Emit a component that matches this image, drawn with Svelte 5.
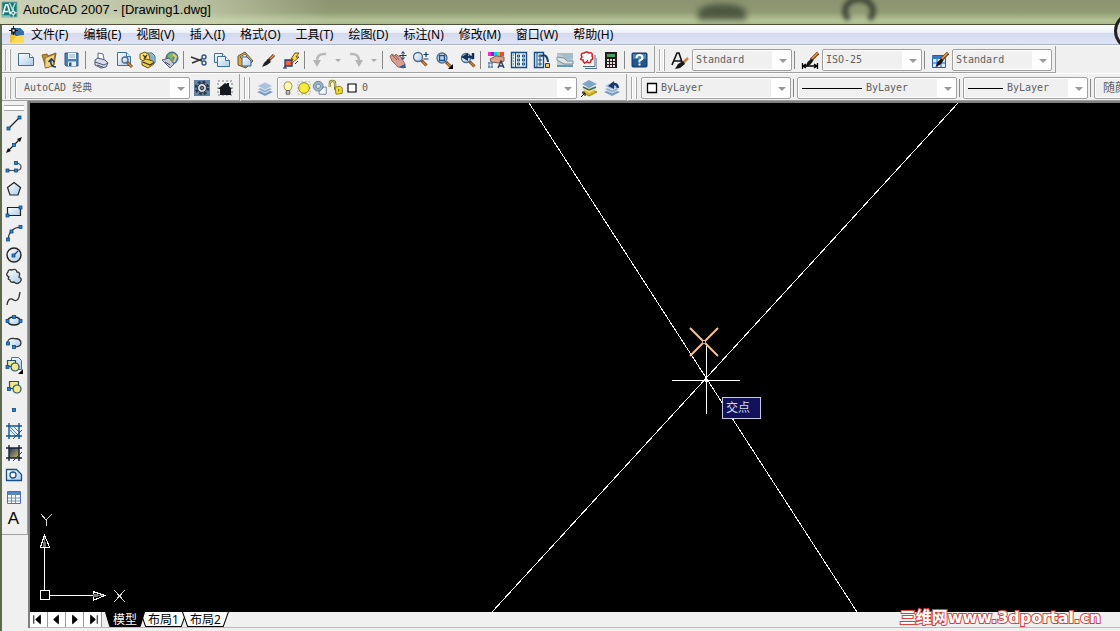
<script>
  const page = (x, y, w, h) =>
    `<path d="M${x} ${y}h${w - 4}l4 4v${h - 4}h-${w}z" fill="url(#paper)" stroke="#3f6f9f"/><path d="M${x + w - 4} ${y}v4h4" fill="#fff" stroke="#3f6f9f"/>`;
  const brush = '<path d="M17 2L10 9" stroke="#6b3a17" stroke-width="3.2"/><path d="M16.500 2.200L10.500 8" stroke="#e59a4c" stroke-width="1.600"/><path d="M10.500 7.500l2 2-3 4-5 2.500 2-5z" fill="#161616"/>';
  const dot = (x, y) => `<rect x="${x - 1.5}" y="${y - 1.5}" width="3" height="3" fill="#2f80c8" stroke="#0b4c88" stroke-width=".8"/>`;
  const lens = (x, y, r) =>
    `<path d="M${x + r - 1} ${y + r - 1}l5 5" stroke="#7b4319" stroke-width="3"/><path d="M${x + r} ${y + r}l4 4" stroke="#d18c4a" stroke-width="1.200"/><circle cx="${x}" cy="${y}" r="${r}" fill="url(#paper)" stroke="#4d6b88" stroke-width="1.300"/>`;
  const printer = '<path d="M6 8l0-6 5 1 1 5" fill="#fff" stroke="#5a6a90"/><path d="M3 9l3-2 7 2 3 3-2 4-5 1-6-3z" fill="#d9dbe8" stroke="#4a5578"/><path d="M3 11l9 3 4-2M5 14l6 2" fill="none" stroke="#4a5578"/>';
  const stack = '<path d="M1 13l8-3 8 3-8 4z" fill="#7b9cc2"/><path d="M1 10l8-3 8 3-8 4z" fill="#8fadcf" stroke="#f0f0f0" stroke-width=".8"/><path d="M1 7l8-4 8 4-8 4z" fill="#a9c2de" stroke="#f0f0f0" stroke-width=".8"/>';
  const hash = '<path d="M4 1v16M14 1v16M1 4h16M1 14h16" stroke="#14538f" stroke-width="1.400"/>';

  const icons = {
    app: '<path d="M1 1h16v16H1z" fill="#147b78"/><path d="M2 14L5 4h2l3 10M3 11h5" fill="none" stroke="#fff" stroke-width="1.600"/><path d="M9 2l3 7 3-7M1 16h9" fill="none" stroke="#b8e3dc" stroke-width="1.400"/><path d="M13 8v9M9 12.500h8" stroke="#fff"/><path d="M11.500 11h3v3h-3z" fill="#147b78" stroke="#fff"/><path d="M1 1h16v16H1z" fill="none" stroke="#8ab5aa"/>',
    doc: '<path d="M3 2h9l4 4v9H3z" fill="#1c4a80"/><path d="M8 2h4l4 4v3H8z" fill="#2f70ad"/><path d="M2 9l4-1 2 2 8-1v8H2z" fill="#f0c23c"/><path d="M16 9L8 10 3 17h13z" fill="#ffd95a"/><path d="M5.500 0v9M1 4.500h9" stroke="#111"/><path d="M4 3h3v3H4z" fill="#fff" stroke="#111"/>',
    new: page(1.5, 2.5, 15, 12),
    open: '<path d="M2 4l5-1 1 2 8-3-2 12-8 3z" fill="#b98f35" stroke="#8b6420"/><path d="M5 7l10-4-2 12-8 2z" fill="#ecd489" stroke="#8b6420" stroke-width=".8"/><path d="M16 16c-4 0-6-3-5-7M8.500 11l3-3 3 3" fill="none" stroke="#173e6e" stroke-width="1.600"/>',
    save: '<path d="M2 2h13v13H3l-1-1z" fill="#4c81b7" stroke="#285b91"/><path d="M5 2h8v6H5z" fill="#e6f0f8"/><path d="M6 4h6M6 6h6" stroke="#9ab6ce"/><path d="M5 10.500h8V15H5z" fill="#e6edf4"/><path d="M6 11.500h2.500V15H6z" fill="#285b91"/>',
    print: printer,
    preview: page(2.5, 1.5, 13, 13) + lens(10, 9, 3),
    publish: '<path d="M6 2h8l3 3v7H6z" fill="#b4d3e6" stroke="#356989"/><circle cx="12" cy="7" r="4" fill="#7fb4da"/><path d="M2 3l5-2 4 3 1 4-5 3-5-3z" fill="#ffe365" stroke="#725b16"/><path d="M4 10l4-2 7 2 1 3-6 4-6-3z" fill="#e6cf50" stroke="#605019"/><path d="M5 4l3 3M6 8l3-4M5 11l7 3 3-2" fill="none" stroke="#4a3410" stroke-width="1.300"/>',
    globe: '<circle cx="11" cy="7" r="6" fill="#4188bd" stroke="#446775"/><path d="M7 4q4-4 8 1l-4 2 2 5-4-1-2-3z" fill="#86b65b"/><path d="M12 3l3 3-2 5" stroke="#eacb75" fill="none" stroke-width="2"/><path d="M1 9l7-2 5 6-4 4z" fill="#c9cad7" stroke="#596176"/><path d="M4 11l5 3" stroke="#444"/>',
    cut: '<path d="M1 6l11 4M2 12l10-4" stroke="#333" stroke-width="1.400"/><circle cx="14" cy="6" r="2" fill="none" stroke="#2d5689" stroke-width="1.400"/><circle cx="14" cy="12" r="2" fill="none" stroke="#2d5689" stroke-width="1.400"/>',
    copy: page(1.5, 2.5, 12, 9) + page(4.5, 5.5, 12, 10),
    paste: '<path d="M2 5l7-4 8 9-7 7-8-3z" fill="#d9a94c" stroke="#765426"/><path d="M4 6l5-3 2 2-4 4z" fill="#eee" stroke="#666"/><path d="M6 6h5l4 4v5H6z" fill="url(#paper)" stroke="#34618a"/>',
    match: '<path d="M15 4L9 10" stroke="#5b2d16" stroke-width="3"/><path d="M15 4l-4 4" stroke="#dda06e" stroke-width="1.200"/><path d="M9 8l3 3-4 3-5 2 2-4z" fill="#202020"/>',
    block: '<path d="M3 9h7v6H3z" fill="#ef6441" stroke="#1c3e6c" stroke-width="1.300"/><path d="M1 17h4M3 15v2M13 13l3-3" stroke="#222"/><path d="M13 2h4l-3 4h3l-8 7 2-5H9z" fill="#ffe041" stroke="#6a3a12" stroke-width=".9"/>',
    undo: '<path d="M15 3Q6 2 6 10" fill="none" stroke="#b9b9b9" stroke-width="2.500"/><path d="M2 9h8l-4 7z" fill="#b4b4b4"/>',
    redo: '<path d="M3 3q9-1 9 7" fill="none" stroke="#b9b9b9" stroke-width="2.500"/><path d="M8 9h8l-4 7z" fill="#b4b4b4"/>',
    pan: '<path d="M1 5l2-2 3 2 1-2 2 2 2 0 5 8-1 4-6-1-6-6z" fill="#d99c91" stroke="#80534e" stroke-width=".8"/><path d="M3 4l5 5M6 4l4 5" stroke="#8d625b"/><path d="M10 16l6-3 1 4h-5z" fill="#355f94"/><path d="M14 1v7M10.500 4.500h7" stroke="#123b6d"/><path d="M12.500 2.500L14 .500l1.500 2M12.500 6.500L14 8.500l1.500-2" fill="none" stroke="#123b6d"/>',
    zoomrt: lens(6, 6, 4.5) + '<path d="M14 1v5M11.500 3.500h5M11.500 8h5" stroke="#123b6d" stroke-width="1.200"/>',
    zoomwin: lens(7, 7, 5) + '<path d="M4.500 4.500h5v5h-5z" fill="#bdd4ea" stroke="#164f87" stroke-width="1.400"/><path d="M18 13v5h-5z" fill="#000"/>',
    zoomprev: lens(8, 7, 4.5) + '<path d="M15 2v6q-1-3-5-2" fill="none" stroke="#12325c" stroke-width="2.500"/><path d="M3 6l7-4v8z" fill="#12325c"/>',
    props: '<path d="M1 1h3v4H1z" fill="#f22bc8"/><path d="M4 1h3v4H4z" fill="#7428df"/><path d="M7 1h3v4H7z" fill="#1ac4eb"/><path d="M10 1h3v4h-3z" fill="#74d83a"/><path d="M13 1h4v4h-4z" fill="#ff4134"/><path d="M3 8l6-3 8 1v4l-5 2-8-1z" fill="#dfa58f" stroke="#82584e"/><path d="M2 11v6M5 11v6M1 12h5M1 16h5" stroke="#47759f"/><path d="M11 17l3-7 3 7M12 15h4" fill="none" stroke="#283e5c" stroke-width="1.400"/>',
    center: '<path d="M1.500 1.500h15v15h-15z" fill="#eaf2fa" stroke="#174d83" stroke-width="1.400"/><path d="M5.500 2v14" stroke="#174d83"/><path d="M3 4h1M3 7h1M3 10h1M3 13h1" stroke="#174d83"/><path d="M7.500 4h2v2h-2zM12.500 4h2v2h-2zM7.500 8h2v2h-2zM12.500 8h2v2h-2zM7.500 12h2v2h-2zM12.500 12h2v2h-2z" fill="none" stroke="#174d83"/>',
    palette: '<path d="M1.500 1.500h9v15h-9z" fill="#eaf2fa" stroke="#174d83" stroke-width="1.400"/><path d="M4 2v14" stroke="#174d83"/><path d="M6 4h2v2H6zM6 8h2v2H6zM6 12h2v2H6z" fill="none" stroke="#174d83"/><path d="M8 5q6-3 7 6" fill="none" stroke="#173d6c" stroke-width="2"/><path d="M12.500 12.500h4v4h-4z" fill="#e9cf79" stroke="#173d6c"/>',
    sheet: '<path d="M1 2h16v14H1z" fill="#bfcbd3"/><path d="M1 3q6 0 9 6l7-2V2H1z" fill="#a5bccb"/><path d="M1 6l7 1 3 3h6v3H8L1 9z" fill="#dfe5e6" stroke="#78909f"/><path d="M1 15h16" stroke="#6599b7" stroke-width="2"/>',
    markup: '<path d="M4 15.500h12V4M6 17.500h12V7" fill="none" stroke="#526c86"/><path d="M1 1h13v13H1z" fill="#fff4f2"/><path d="M3 6q-2-4 2-4 3-2 5 0 4-1 3 3 2 3-1 4 0 4-4 2-4 2-4-2-4 0-1-3z" fill="#fff" stroke="#d6242b" stroke-width="1.600"/><path d="M5 13l4-4" stroke="#d6242b"/>',
    calc: '<path d="M3 1h12v16H3z" fill="#231a1b"/><path d="M5 3h8v3H5z" fill="#4e9b65"/><path d="M5 8h2v2H5zM8 8h2v2H8zM11 8h2v2h-2zM5 11h2v2H5zM8 11h2v2H8zM11 11h2v2h-2zM5 14h2v2H5zM8 14h2v2H8zM11 14h2v2h-2z" fill="#e9dddd"/>',
    help: '<rect x="1" y="2" width="15" height="14" rx="1" fill="#20578f" stroke="#10365f"/><path d="M2 3h13v5H2z" fill="#4c82b5"/><path d="M5.500 7Q5.500 4 8.500 4t3 3Q11.500 8.500 8.500 9.500v2" fill="none" stroke="#fff" stroke-width="2"/><path d="M7.500 12.500h2v2h-2z" fill="#fff"/>',
    textstyle: '<path d="M1 14L6 2h2l4 12M3 10h7" fill="none" stroke="#101010" stroke-width="1.600"/><path d="M17 7l-5 5" stroke="#c68446" stroke-width="2.500"/><path d="M12 10l2 3-5 4-5 1 3-5z" fill="#181818"/>',
    dimstyle: brush + '<path d="M1.500 12v6M16.500 12v6M2 15h14M5 13l-3 2 3 2M13 13l3 2-3 2" fill="none" stroke="#000" stroke-width="1.300"/>',
    tablestyle: '<path d="M1.500 4.500h13v12h-13z" fill="#d9eafa" stroke="#235eaa"/><path d="M1 5h14v3H1z" fill="#3479c4"/><path d="M2 12h12M6 8v8M10 8v8" stroke="#235eaa"/>' + brush,
    gear: '<path d="M1 1h16v16H1z" fill="#5f83a8"/><circle cx="9" cy="9" r="6" fill="none" stroke="#2a343f" stroke-width="2.400" stroke-dasharray="2.700 2"/><circle cx="9" cy="9" r="4.500" fill="#dce0df" stroke="#2a343f"/><circle cx="9" cy="9" r="1.800" fill="#5f83a8" stroke="#2a343f"/>',
    home: '<path d="M2 2h14v14H2z" fill="none" stroke="#777" stroke-dasharray="2 2"/><path d="M3 9l6-5 2 1V4h2v3l3 3h-1v6H4v-6H2z" fill="#15191d"/>',
    layers: stack,
    layerprev: stack + '<path d="M15 9Q14 3 8 6" fill="none" stroke="#153b6b" stroke-width="2.500"/><path d="M5 7l6-5v8z" fill="#153b6b"/>',
    layercur: '<path d="M2 13l8-3 7 3-8 4z" fill="#d4b72b" stroke="#93851d"/><path d="M2 10l8-3 7 3-8 4z" fill="#f4e16e"/><path d="M2 5l7-4 8 4-8 4z" fill="#7fa4c6"/><path d="M3 8l6 3 7-3" fill="none" stroke="#33658e" stroke-width="1.500"/><path d="M1 18l4-4M2 14h3v3" fill="none" stroke="#000"/>',
    bulb: '<path d="M7 12Q4 9 4.500 6 5 2 9 2t4.500 4Q14 9 11 12z" fill="#fff8ae" stroke="#a58b2a"/><path d="M7 12h4v4H7z" fill="#c8c8b8" stroke="#555"/><path d="M7 6q0-2 2-2" stroke="#fff" fill="none" stroke-width="1.500"/>',
    sun: '<path d="M2 2h14v14H2z" fill="none" stroke="#b5b57e" stroke-dasharray="2 2"/><circle cx="9" cy="9" r="6" fill="#f7eb35" stroke="#777b21"/>',
    freeze: '<path d="M8 8h8v8H8z" fill="#f5f7f9" stroke="#667d93"/><circle cx="7" cy="7" r="5.500" fill="#9fb6c8" stroke="#5e7d97"/><circle cx="7" cy="7" r="2.500" fill="#dae6ee" stroke="#5e7d97"/>',
    lock: '<path d="M2 8V4q0-3 3-3t3 3v7" fill="none" stroke="#777521" stroke-width="2.500"/><path d="M2 8V4q0-3 3-3t3 3v4" fill="none" stroke="#eee87a"/><path d="M8 8l6-1 2 2v6l-7 1z" fill="#f1df2c" stroke="#807820"/><path d="M12 10v3" stroke="#5f5719"/>',
    swatch: '<path d="M4.500 4.500h9v9h-9z" fill="#fff" stroke="#000" stroke-width="1.300"/>',
    line: '<path d="M4 14L14 4" stroke="#222" stroke-width="1.200"/>' + dot(3.5, 14.5) + dot(14.5, 3.5),
    xline: '<path d="M3 15L15 3" stroke="#222" stroke-width="1.200"/><path d="M1 17l2-5 3 3zM17 1l-2 5-3-3z" fill="#111"/>' + dot(9, 9),
    pline: '<path d="M3 12.500h8q5 0 5-3.500t-5-4" fill="none" stroke="#445" stroke-width="1.200"/>' + dot(2.5, 12.5) + dot(11, 12.5) + dot(11, 5),
    polygon: '<path d="M9 2.500l6.500 5-2.500 7.500H5L2.500 7.500z" fill="url(#paper)" stroke="#222" stroke-width="1.200"/>',
    rect: '<path d="M2.500 5.500h13v8h-13z" fill="url(#paper)" stroke="#222" stroke-width="1.200"/>' + dot(2.500, 13.5) + dot(15.5, 5.5),
    arc: '<path d="M3 16Q4 4 15 3" fill="none" stroke="#334" stroke-width="1.200"/>' + dot(3, 15.5) + dot(6.5, 7.500) + dot(15.500, 3),
    circle: '<circle cx="9" cy="9" r="7" fill="url(#paper)" stroke="#222" stroke-width="1.400"/><path d="M9 9l4-4" stroke="#164f87" stroke-width="1.300"/>' + dot(8.5, 9.5),
    cloud: '<path d="M4 9Q0 7 3 4q0-3 4-2 4-2 5 2 4 0 2 5 4 2 1 5-3 3-6 0-4 1-4-2-3-1-1-3z" fill="url(#paper)" stroke="#333" stroke-width="1.300"/>',
    spline: '<path d="M2 15q1-7 5-6 5 4 7-2l1-5" fill="none" stroke="#333" stroke-width="1.300"/>',
    ellipse: '<ellipse cx="9" cy="9" rx="6.500" ry="4" fill="url(#paper)" stroke="#222" stroke-width="1.300"/>' + dot(2.500, 9) + dot(15.500, 9) + dot(9, 5),
    earc: '<path d="M3 10Q1 5 8 4q8 0 8 5t-7 4z" fill="url(#paper)"/><path d="M2.500 10Q2 4 9 4.500q7 0 7 4.500 0 4-7 4" fill="none" stroke="#333" stroke-width="1.300"/>' + dot(3, 9.5) + dot(9, 13),
    insert: '<path d="M6.500 1.500h7l3 3v9h-10z" fill="url(#paper)" stroke="#426f9c"/><path d="M2.500 4.500h8v6h-8z" fill="#eee98b" stroke="#24506b" stroke-width="1.200"/><circle cx="10" cy="11" r="4" fill="#f1e890" stroke="#24506b" stroke-width="1.200"/><path d="M18 13v5h-5z" fill="#000"/>' + dot(2.5, 11),
    make: '<path d="M4.500 3.500h9v7h-9z" fill="#f1e890" stroke="#24506b" stroke-width="1.200"/><circle cx="12" cy="11" r="4" fill="#f1e890" stroke="#24506b" stroke-width="1.200"/>' + dot(4, 11),
    point: dot(9, 10),
    hatch: '<path d="M4 4h10v10H4z" fill="#e5f1fa"/><path d="M5 8l6 6M5 5l9 9M9 5l5 5" stroke="#4b86b9"/>' + hash + '<path d="M8 17l9-9" stroke="#14538f"/>',
    gradient: '<path d="M4 4h10v10H4z" fill="url(#dusk)"/>' + hash.replace('#14538f', '#17203a') + '<path d="M8 17l9-9" stroke="#25365c"/>',
    region: '<path d="M1.500 3.500h10l5 5v6h-15z" fill="url(#paper)" stroke="#194f88" stroke-width="1.300"/><circle cx="8" cy="9" r="3" fill="#fff" stroke="#194f88" stroke-width="1.300"/>',
    table: '<path d="M2.500 3.500h13v12h-13z" fill="#fff" stroke="#4774b4"/><path d="M3 4h12v3H3z" fill="#5485ca"/><path d="M3 10h12M3 13h12M6.500 6v9M10.500 6v9" stroke="#6e94c9"/>'
  };

  const menus = ['文件(F)', '编辑(E)', '视图(V)', '插入(I)', '格式(O)', '工具(T)', '绘图(D)', '标注(N)', '修改(M)', '窗口(W)', '帮助(H)'];
  const standard = [
    ['new', '新建'], ['open', '打开'], ['save', '保存'], '|',
    ['print', '打印'], ['preview', '打印预览'], ['publish', '发布'], ['globe', '三维 DWF'], '|',
    ['cut', '剪切'], ['copy', '复制'], ['paste', '粘贴'], ['match', '特性匹配'], ['block', '块编辑器'], '|',
    ['undo', '放弃'], 'v', ['redo', '重做'], 'v', '|',
    ['pan', '实时平移'], ['zoomrt', '实时缩放'], ['zoomwin', '窗口缩放'], ['zoomprev', '缩放上一个'], '|',
    ['props', '特性'], ['center', '设计中心'], ['palette', '工具选项板'], ['sheet', '图纸集'], ['markup', '标记集'], ['calc', '计算器'], '|',
    ['help', '帮助']
  ];
  const draw = [
    ['line', '直线'], ['xline', '构造线'], ['pline', '多段线'], ['polygon', '正多边形'], ['rect', '矩形'],
    ['arc', '圆弧'], ['circle', '圆'], ['cloud', '修订云线'], ['spline', '样条曲线'], ['ellipse', '椭圆'],
    ['earc', '椭圆弧'], ['insert', '插入块'], ['make', '创建块'], ['point', '点'], ['hatch', '图案填充'],
    ['gradient', '渐变色'], ['region', '面域'], ['table', '表格']
  ];
  const steps = [
    ['首个', 'M4 3v9M11 3v9L6 7.500z'], ['上一个', 'M11 3v9L6 7.500z'],
    ['下一个', 'M7 3v9l5-4.500z'], ['末个', 'M14 3v9M7 3v9l5-4.500z']
  ];
  let tab = $state('模型');
</script>

{#snippet icon(name)}
  <svg class="icon" viewBox="0 0 18 18" aria-hidden="true">{@html icons[name]}</svg>
{/snippet}

{#snippet tool(name, label)}
  <button class="tool" aria-label={label}>{@render icon(name)}</button>
{/snippet}

{#snippet combo(label, value, kind, art)}
  <div class="combo {kind}">
    {#if art === 'color'}
      <span class="art">{@render icon('swatch')}</span>
    {:else if art === 'layer'}
      <span class="art layer">{#each ['bulb', 'sun', 'freeze', 'lock', 'swatch'] as n}{@render icon(n)}{/each}</span>
    {:else if art === 'stroke'}
      <span class="art rule"></span>
    {/if}
    <select aria-label={label}><option>{value}</option></select>
  </div>
{/snippet}

<svg class="defs" aria-hidden="true">
  <defs>
    <linearGradient id="paper" x1="0" y1="0" x2="1" y2="1"><stop stop-color="#fff" /><stop offset="1" stop-color="#aacbe8" /></linearGradient>
    <linearGradient id="dusk" x1="0" y1="0" x2="1" y2="1"><stop stop-color="#22315b" /><stop offset="1" stop-color="#c9bd62" /></linearGradient>
  </defs>
</svg>

<div class="window">
  <header class="title">
    <i class="blob"></i><i class="ring"></i>
    {@render icon('app')}
    <h1>AutoCAD 2007 - [Drawing1.dwg]</h1>
  </header>
  <div class="frame">
    <nav class="menu">
      {@render icon('doc')}
      {#each menus as m}<button>{m}</button>{/each}
      <i class="orb"></i>
    </nav>

    <div class="row">
      <div class="bar">
        <i class="grip"></i>
        {#each standard as t}
          {#if t === '|'}<i class="sep"></i>
          {:else if t === 'v'}<button class="more" aria-label="更多"></button>
          {:else}{@render tool(t[0], t[1])}{/if}
        {/each}
      </div>
      <div class="bar">
        <i class="grip"></i>
        {@render tool('textstyle', '文字样式管理')}
        {@render combo('文字样式', 'Standard', 'small')}
        <i class="sep"></i>
        {@render tool('dimstyle', '标注样式管理')}
        {@render combo('标注样式', 'ISO-25', 'small')}
        <i class="sep"></i>
        {@render tool('tablestyle', '表格样式管理')}
        {@render combo('表格样式', 'Standard', 'small')}
      </div>
    </div>

    <div class="row">
      <div class="bar">
        <i class="grip"></i>
        {@render combo('工作空间', 'AutoCAD 经典', 'space')}
        {@render tool('gear', '工作空间设置')}
        {@render tool('home', '我的工作空间')}
      </div>
      <div class="bar">
        <i class="grip"></i>
        {@render tool('layers', '图层特性管理器')}
        {@render combo('图层', '0', 'layers', 'layer')}
        {@render tool('layercur', '置为当前图层')}
        {@render tool('layerprev', '上一个图层')}
      </div>
      <div class="bar last">
        <i class="grip"></i>
        {@render combo('颜色', 'ByLayer', 'color', 'color')}
        <i class="sep"></i>
        {@render combo('线型', 'ByLayer', 'ltype', 'stroke')}
        <i class="sep"></i>
        {@render combo('线宽', 'ByLayer', 'weight', 'stroke')}
        <i class="sep"></i>
        {@render combo('打印样式', '随颜色', 'plot')}
      </div>
    </div>

    <div class="work">
      <aside>
        <div class="draw">
          <i class="grip flat"></i>
          {#each draw as d}{@render tool(d[0], d[1])}{/each}
          <button class="tool text" aria-label="多行文字">A</button>
        </div>
      </aside>
      <main>
        <div class="canvas">
          <svg class="drawing" shape-rendering="crispEdges" role="img" aria-label="绘图区">
            <g stroke="#fff" fill="none">
              <path d="M499 0L827 509M928 0L462 509" />
              <path d="M642 277.500h68M676.500 243v68" />
              <path d="M675.500 276.500h2v2h-2z" />
              <path d="M14.500 487V444M20 492.500h43M10.500 487.500h9v9h-9z" />
              <path d="M14.500 432l-4 12h9zM75 492.500l-12-4v9z" />
              <path d="M11 411l5 6v6M22 411l-6 6M84 487l11 12M95 487l-11 12" stroke="#ddd" />
            </g>
            <path d="M14.500 434l-2 10h4zM73 492.500l-10-2v4z" fill="#777" />
            <path d="M660 225l28 28M688 225l-28 28" stroke="#ffc090" stroke-width="2" shape-rendering="auto" />
            <path d="M673 238h2v2h-2z" fill="#000" />
          </svg>
          <span class="snap">交点</span>
        </div>
        <footer>
          {#each steps as s}
            <button class="step" aria-label={s[0]}><svg viewBox="0 0 18 15"><path d={s[1]} fill="#000" stroke="#000" /></svg></button>
          {/each}
          <div class="tabs">
            {#each ['模型', '布局1', '布局2'] as t}
              <button class="tab" class:on={tab === t} onclick={() => (tab = t)}>
                <svg viewBox="0 0 46 15" preserveAspectRatio="none" aria-hidden="true"><path d="M.500 0l5 14.500h35l5-14.500" /></svg><span>{t}</span>
              </button>
            {/each}
          </div>
        </footer>
      </main>
    </div>
  </div>
  <div class="mark"><b>三维网</b>www.3dportal.cn</div>
</div>

<style>
  :global(body) { margin: 0; background: #f0f0f0; }
  .defs { position: absolute; width: 0; height: 0; }
  .window { position: relative; display: flex; flex-direction: column; min-height: 100vh; overflow: hidden; background: #f0f0f0; font-family: "Noto Sans", "Noto Sans CJK SC", sans-serif; font-size: 12px; color: #000; }
  button { border: 0; padding: 0; margin: 0; background: none; font: inherit; color: inherit; }
  .icon { display: block; flex: none; width: 18px; height: 18px; fill: none; }

  .title { position: relative; display: flex; align-items: center; gap: 5px; height: 25px; padding: 0 1px 5px; box-sizing: border-box; overflow: hidden; border-bottom: 1px solid #4d513e;
    background: linear-gradient(90deg, rgba(224, 228, 206, .75), rgba(214, 220, 190, .6) 200px, transparent 330px), linear-gradient(#8b9370, #909973 50%, #b4c497 85%, #a9ba8c); }
  .title h1 { margin: 0; font: 400 13px/18px "Liberation Sans", sans-serif; z-index: 1; }
  .title .icon { width: 17px; height: 17px; z-index: 1; }
  .blob { position: absolute; left: 698px; top: 4px; width: 48px; height: 16px; border-radius: 50% 50% 0 0; background: #36402f; filter: blur(3px); opacity: .75; }
  .ring { position: absolute; left: 842px; top: -4px; width: 22px; height: 18px; border: 6px solid #2f352b; border-bottom-color: transparent; border-radius: 50%; filter: blur(2px); opacity: .8; }

  .frame { display: flex; flex: 1; flex-direction: column; border-left: 2px solid #5d6a50; }
  .menu { position: relative; display: flex; align-items: center; height: 19px; padding-left: 6px; border-bottom: 1px solid #aab2cb; background: linear-gradient(#fff, #eef0fa 40%, #d4daee 45%, #dfe4f5); }
  .menu button { padding: 0 8px 0 7px; line-height: 18px; white-space: nowrap; }
  .menu .icon { margin-right: -2px; }
  .orb { position: absolute; right: -32px; top: -13px; width: 32px; height: 32px; border: 3px solid #222; border-radius: 50%; background: #ddd; }

  .row { display: flex; height: 28px; border-top: 1px solid #fff; box-sizing: border-box; overflow: hidden; }
  .bar { display: flex; flex: none; align-items: center; padding: 2px 3px 0 0; margin-right: 1px; border: solid #a0a0a0; border-width: 0 1px 1px 0; }
  .bar.last { flex: 1; min-width: 0; border-right: 0; margin-right: 0; }
  .grip { flex: none; width: 6px; height: 22px; margin: 0 3px; box-sizing: border-box; border: solid #a8a8a8; border-width: 0 1px; background: linear-gradient(90deg, #fff 1px, #f0f0f0 1px 3px, #fff 3px); }
  .sep { flex: none; width: 1px; height: 18px; margin: 0 3px 0 2px; background: #888; }
  .tool { display: flex; flex: none; align-items: center; justify-content: center; width: 23px; height: 22px; }
  .more { flex: none; width: 13px; height: 22px; }
  .more::before { content: ""; display: block; margin: auto; width: 0; border: 3px solid transparent; border-top-color: #aaa; border-bottom: 0; }

  .combo { position: relative; display: flex; flex: none; align-items: center; box-sizing: border-box; height: 22px; margin-left: 1px; padding: 2px 22px 2px 3px; border: 1px solid #a0a0a0; border-radius: 2px; background: linear-gradient(#f0f0f0, #f0f0f0) 1px 1px / calc(100% - 20px) 18px no-repeat #fff; }
  .sep + .combo { margin-left: 0; }
  .combo::after { content: ""; position: absolute; right: 4px; top: 9px; border: 4px solid transparent; border-top-color: #999; border-bottom: 0; pointer-events: none; }
  .combo select { flex: 1; min-width: 0; height: 16px; padding: 0; border: 0; appearance: none; background: transparent; color: #606060; font: 10px/16px "DejaVu Sans Mono", "Noto Sans CJK SC", monospace; }
  .small { width: 100px; }
  .space { width: 175px; padding-left: 8px; }
  .layers { width: 300px; }
  .color { width: 150px; padding-left: 1px; }
  .ltype { width: 160px; padding-left: 4px; }
  .weight { width: 125px; padding-left: 4px; }
  .plot { width: 125px; padding-left: 8px; }
  .plot select { font-size: 12px; }
  .art { flex: none; }
  .layer { display: flex; margin: 0 2px 0 -1px; }
  .layer .icon { width: 16px; }
  .rule { height: 1px; width: 60px; margin-right: 4px; background: #000; }
  .weight .rule { width: 35px; }

  .work { display: flex; flex: 1; padding-bottom: 3px; }
  aside { flex: none; width: 26px; }
  .draw { display: flex; flex-direction: column; align-items: center; padding: 4px 2px 4px 0; border: solid #a0a0a0; border-width: 0 1px 1px 0; }
  .flat { width: 20px; height: 6px; margin: 0 0 1px; border-width: 1px 0; background: #fff; }
  .text { font: 17px/22px "Liberation Sans", sans-serif; }
  main { display: flex; flex: 1; flex-direction: column; min-width: 0; border-left: 2px solid #808080; border-top: 2px solid #808080; }
  .canvas { position: relative; flex: 1; min-height: 508px; background: #000; overflow: hidden; }
  .drawing { position: absolute; width: 100%; height: 100%; }
  .snap { position: absolute; left: 692px; top: 294px; width: 34px; padding-left: 3px; border: 1px solid #c8c8e4; background: #12125a; color: #d8d8ee; line-height: 20px; }

  footer { display: flex; height: 15px; border-bottom: 1px solid #bbb; background: #f0f0f0; }
  .step { flex: none; width: 18px; height: 15px; box-sizing: border-box; border-right: 1px solid #999; background: #fff; }
  .step svg { display: block; width: 17px; height: 15px; }
  .tabs { display: flex; padding-left: 3px; }
  .tab { position: relative; height: 15px; padding: 0 8px; margin-right: -5px; line-height: 14px; white-space: nowrap; }
  .tab svg { position: absolute; left: 0; top: 0; width: 100%; height: 15px; fill: #fff; stroke: #000; }
  .tab span { position: relative; }
  .on { z-index: 1; color: #fff; }
  .on svg { fill: #000; }
  .mark { position: absolute; right: 19px; bottom: 4px; font: 700 16px/18px "DejaVu Sans", sans-serif; color: #fff; -webkit-text-stroke: 2px #d8413c; paint-order: stroke fill; pointer-events: none; }
  .mark b { font: 700 16px/18px "Noto Sans CJK SC", sans-serif; }
</style>
